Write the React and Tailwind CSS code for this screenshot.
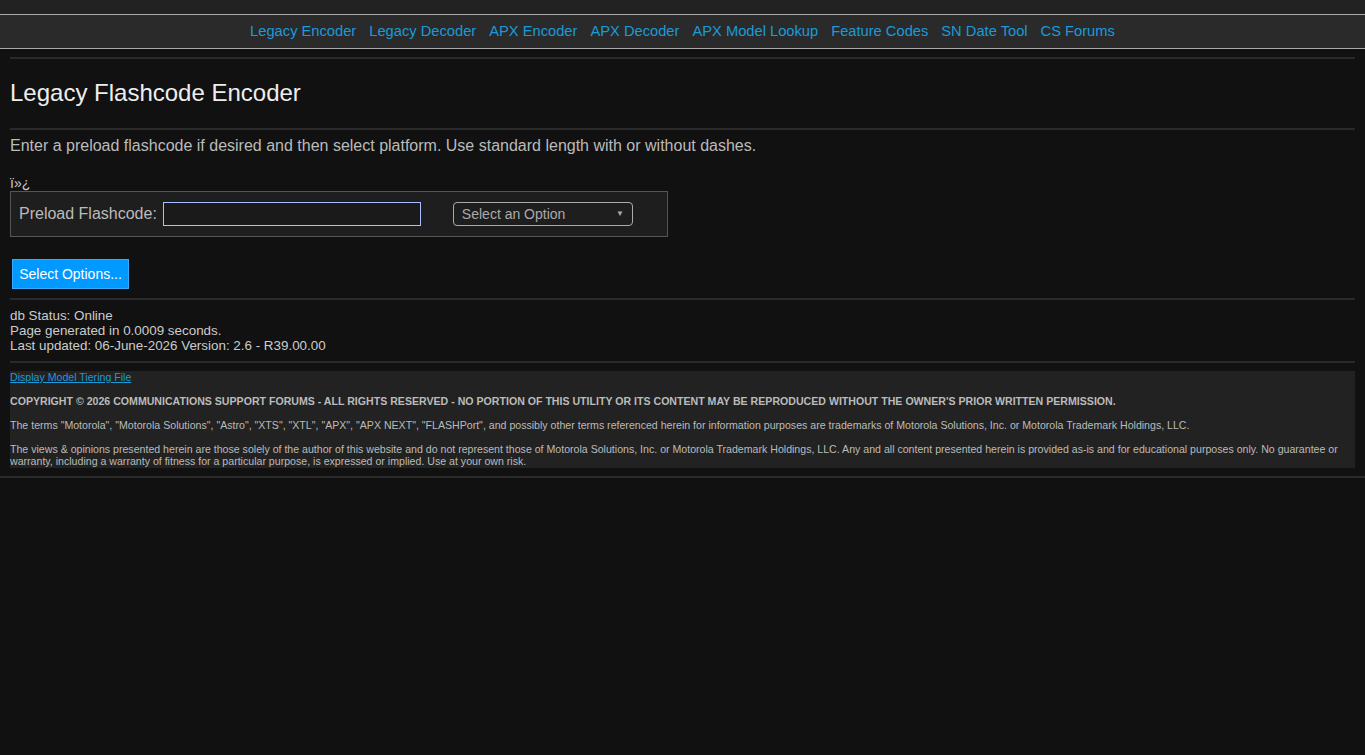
export default function App() {
  const links = ["Legacy Encoder","Legacy Decoder","APX Encoder","APX Decoder","APX Model Lookup","Feature Codes","SN Date Tool","CS Forums"];
  return (
    <div className="min-h-[755px] bg-[#111111] text-[#cccccc]" style={{fontFamily:'"Liberation Sans", Arial, sans-serif'}}>
      <div className="h-[15px] bg-[#222222] border-b border-[#aaaaaa]"></div>
      <div className="h-[34px] bg-[#2a2a2a] border-b border-[#aaaaaa] flex items-center justify-center gap-[13px] text-[14.7px]">
        {links.map(l => <a key={l} className="text-[#1a9ad9]">{l}</a>)}
      </div>
      <div className="px-[10px]">
        <div className="mt-[8px] h-[2px] bg-[#2a2a2a]"></div>
        <h1 className="text-[24px] text-[#eeeeee] mt-[20px] leading-[28px]">Legacy Flashcode Encoder</h1>
        <div className="mt-[21px] h-[2px] bg-[#2a2a2a]"></div>
        <p className="mt-[6px] text-[16px] leading-[20px] text-[#bbbbbb]">Enter a preload flashcode if desired and then select platform. Use standard length with or without dashes.</p>
        <div className="mt-[19px] text-[14px] leading-[16px]">ï»¿</div>
        <div className="w-[658px] h-[46px] border border-[#555555] bg-[#1e1e1e] flex items-center px-[8px]">
          <span className="text-[16px] text-[#bbbbbb]">Preload Flashcode:</span>
          <div className="ml-[6px] w-[258px] h-[24px] border border-[#a8c0ff] bg-[#1a1a1a]"></div>
          <div className="ml-[32px] w-[180px] h-[24px] border border-[#aaaaaa] rounded-[4px] flex items-center justify-between px-[8px] text-[14px] text-[#aaaaaa]">
            <span>Select an Option</span><span className="text-[8px] mt-[-1px]">▼</span>
          </div>
        </div>
        <button className="mt-[22px] ml-[2px] w-[117px] h-[30px] bg-[#0099ff] border border-[#3aaaff] text-white text-[14px]">Select Options...</button>
        <div className="mt-[9px] h-[2px] bg-[#2a2a2a]"></div>
        <div className="mt-[8px] text-[13.4px] leading-[15px] text-[#cccccc]">
          <div>db Status: Online</div>
          <div>Page generated in 0.0009 seconds.</div>
          <div>Last updated: 06-June-2026 Version: 2.6 - R39.00.00</div>
        </div>
        <div className="mt-[8px] h-[2px] bg-[#2a2a2a]"></div>
        <div className="mt-[8px] bg-[#222222] text-[10.6px] leading-[12px] text-[#bbbbbb] pb-[1px]">
          <a className="text-[#1a9ad9] underline">Display Model Tiering File</a>
          <p className="mt-[12px] font-bold">COPYRIGHT © 2026 COMMUNICATIONS SUPPORT FORUMS - ALL RIGHTS RESERVED - NO PORTION OF THIS UTILITY OR ITS CONTENT MAY BE REPRODUCED WITHOUT THE OWNER'S PRIOR WRITTEN PERMISSION.</p>
          <p className="mt-[12px]">The terms "Motorola", "Motorola Solutions", "Astro", "XTS", "XTL", "APX", "APX NEXT", "FLASHPort", and possibly other terms referenced herein for information purposes are trademarks of Motorola Solutions, Inc. or Motorola Trademark Holdings, LLC.</p>
          <p className="mt-[12px]">The views &amp; opinions presented herein are those solely of the author of this website and do not represent those of Motorola Solutions, Inc. or Motorola Trademark Holdings, LLC. Any and all content presented herein is provided as-is and for educational purposes only. No guarantee or warranty, including a warranty of fitness for a particular purpose, is expressed or implied. Use at your own risk.</p>
        </div>
      </div>
      <div className="mt-[8px] h-[2px] bg-[#2a2a2a]"></div>
    </div>
  );
}
